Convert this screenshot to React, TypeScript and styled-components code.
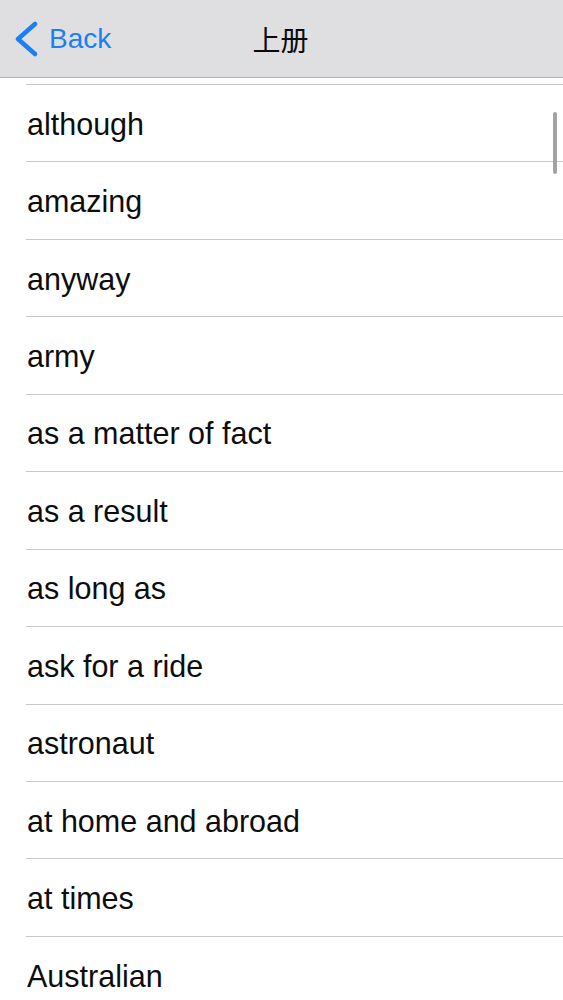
import React from "react";
import styled, { createGlobalStyle } from "styled-components";

const Global = createGlobalStyle`
  html, body { margin: 0; padding: 0; background: #ffffff; overflow: hidden; }
  body { font-family: "Liberation Sans", Arial, "Noto Sans CJK SC", sans-serif; }
`;

const Screen = styled.div`
  position: relative;
  width: 563px;
  height: 1000px;
  overflow: hidden;
  background: #ffffff;
`;

const NavBar = styled.header`
  height: 77px;
  display: grid;
  grid-template-columns: 1fr auto 1fr;
  align-items: center;
  background: #dfdfe1;
  border-bottom: 1px solid #b3b3b6;
`;

const BackButton = styled.button`
  display: flex;
  align-items: center;
  gap: 10px;
  padding: 0 0 0 13px;
  margin: 0;
  border: none;
  background: none;
  color: #1a7ff5;
  font-family: "Liberation Sans", Arial, sans-serif;
  font-size: 28px;
  justify-self: start;
  height: 100%;
  cursor: pointer;
`;

const Title = styled.h1`
  margin: 0;
  font-family: "Noto Sans CJK SC", sans-serif;
  font-weight: 400;
  font-size: 28px;
  color: #0a0a0a;
  padding-right: 2px;
`;

const List = styled.ul`
  list-style: none;
  margin: 0;
  padding: 6px 0 0 0;
`;

const Row = styled.li`
  box-sizing: border-box;
  height: 77.45px;
  margin-left: 26px;
  padding: 2px 0 0 1px;
  border-top: 1px solid #c9c8cd;
  display: flex;
  align-items: center;
  font-family: "Liberation Sans", Arial, sans-serif;
  font-size: 30.5px;
  color: #0d0d0d;
  white-space: nowrap;
`;

const ScrollThumb = styled.div`
  position: absolute;
  left: 553px;
  top: 112px;
  width: 4px;
  height: 62px;
  border-radius: 2px;
  background: #a3a3a3;
`;

const words = [
  "although",
  "amazing",
  "anyway",
  "army",
  "as a matter of fact",
  "as a result",
  "as long as",
  "ask for a ride",
  "astronaut",
  "at home and abroad",
  "at times",
  "Australian",
];

export default function App() {
  return (
    <Screen>
      <Global />
      <NavBar>
        <BackButton>
          <svg width="26" height="36" viewBox="0 0 26 36">
            <polyline
              points="22,3 5,18 22,33"
              fill="none"
              stroke="#1a7ff5"
              strokeWidth="4.5"
              strokeLinecap="round"
              strokeLinejoin="round"
            />
          </svg>
          Back
        </BackButton>
        <Title>上册</Title>
        <div />
      </NavBar>
      <List>
        {words.map((w) => (
          <Row key={w}>{w}</Row>
        ))}
      </List>
      <ScrollThumb />
    </Screen>
  );
}
